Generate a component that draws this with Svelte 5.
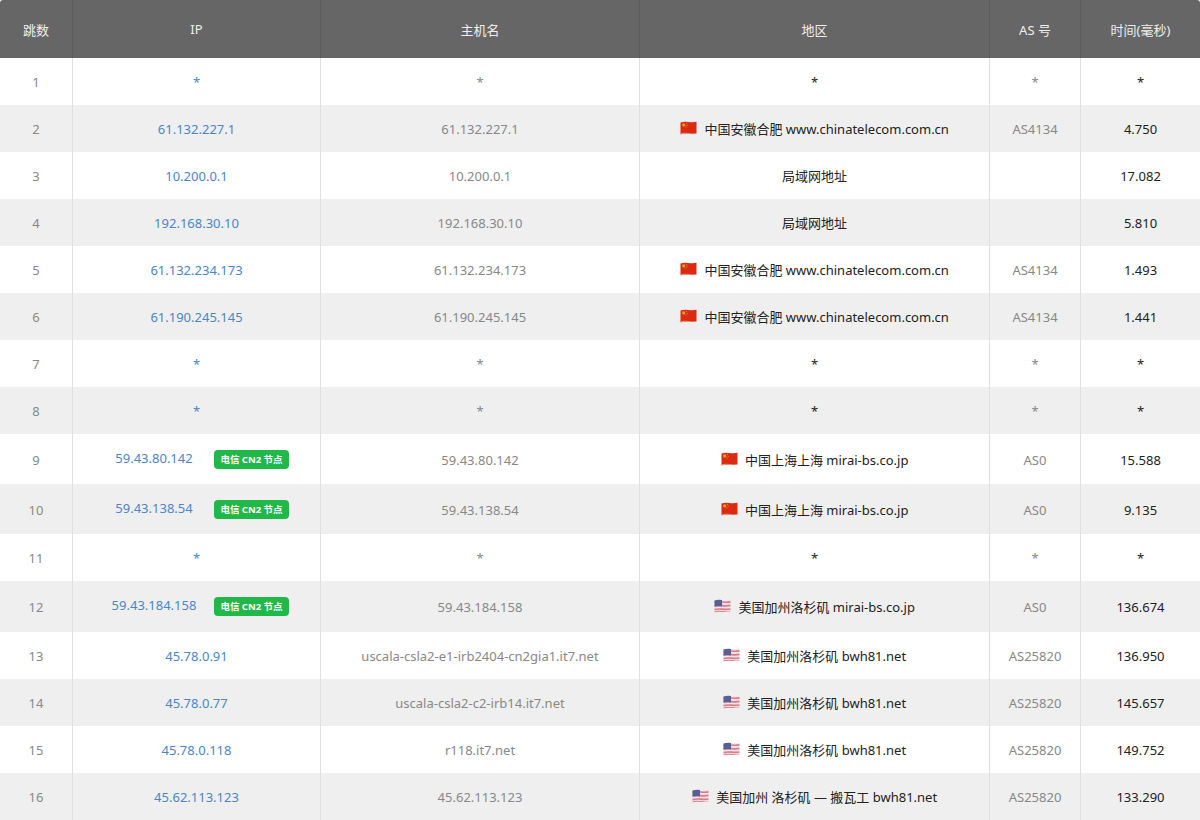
<script>
  const us = "美国加州洛杉矶";
  const hops = [
    { ip: "*", host: "*", region: "*", as: "*", time: "*" },
    { ip: "61.132.227.1", host: "61.132.227.1", flag: "cn", region: "中国安徽合肥 www.chinatelecom.com.cn", as: "AS4134", time: "4.750" },
    { ip: "10.200.0.1", host: "10.200.0.1", region: "局域网地址", as: "", time: "17.082" },
    { ip: "192.168.30.10", host: "192.168.30.10", region: "局域网地址", as: "", time: "5.810" },
    { ip: "61.132.234.173", host: "61.132.234.173", flag: "cn", region: "中国安徽合肥 www.chinatelecom.com.cn", as: "AS4134", time: "1.493" },
    { ip: "61.190.245.145", host: "61.190.245.145", flag: "cn", region: "中国安徽合肥 www.chinatelecom.com.cn", as: "AS4134", time: "1.441" },
    { ip: "*", host: "*", region: "*", as: "*", time: "*" },
    { ip: "*", host: "*", region: "*", as: "*", time: "*" },
    { ip: "59.43.80.142", host: "59.43.80.142", flag: "cn", region: "中国上海上海 mirai-bs.co.jp", as: "AS0", time: "15.588", cn2: true, size: "tall" },
    { ip: "59.43.138.54", host: "59.43.138.54", flag: "cn", region: "中国上海上海 mirai-bs.co.jp", as: "AS0", time: "9.135", cn2: true, size: "tall" },
    { ip: "*", host: "*", region: "*", as: "*", time: "*" },
    { ip: "59.43.184.158", host: "59.43.184.158", flag: "us", region: us + " mirai-bs.co.jp", as: "AS0", time: "136.674", cn2: true, size: "taller" },
    { ip: "45.78.0.91", host: "uscala-csla2-e1-irb2404-cn2gia1.it7.net", flag: "us", region: us + " bwh81.net", as: "AS25820", time: "136.950" },
    { ip: "45.78.0.77", host: "uscala-csla2-c2-irb14.it7.net", flag: "us", region: us + " bwh81.net", as: "AS25820", time: "145.657" },
    { ip: "45.78.0.118", host: "r118.it7.net", flag: "us", region: us + " bwh81.net", as: "AS25820", time: "149.752" },
    { ip: "45.62.113.123", host: "45.62.113.123", flag: "us", region: "美国加州 洛杉矶 — 搬瓦工 bwh81.net", as: "AS25820", time: "133.290" }
  ];
</script>

<table class="trace">
  <colgroup>
    <col class="c1" /><col class="c2" /><col class="c3" /><col class="c4" /><col class="c5" /><col class="c6" />
  </colgroup>
  <thead>
    <tr>
      <th>跳数</th>
      <th>IP</th>
      <th>主机名</th>
      <th>地区</th>
      <th>AS 号</th>
      <th>时间(毫秒)</th>
    </tr>
  </thead>
  <tbody>
    {#each hops as hop, i}
      <tr class={hop.size ?? ""}>
        <td class="muted">{i + 1}</td>
        <td class="ip">
          {#if hop.cn2}
            <div class="ip-wrap">
              <span class="ip-text">{hop.ip}</span>
              <span class="badge">电信 CN2 节点</span>
            </div>
          {:else}
            {hop.ip}
          {/if}
        </td>
        <td class="muted">{hop.host}</td>
        <td class="region">
          {#if hop.flag === "cn"}
            <svg class="flag" viewBox="0 0 17 14" aria-hidden="true">
              <path d="M0.5 1.5 Q4 0.4 8.5 1 T16.5 0.8 V12.6 Q12 13.4 8.5 12.9 T0.5 13.2 Z" fill="#dc2a12" />
              <path d="M0.5 12.4 Q4 11.5 8.5 12.1 T16.5 12 V12.6 Q12 13.4 8.5 12.9 T0.5 13.2 Z" fill="#e99a8a" />
              <circle cx="3.7" cy="3.9" r="1.6" fill="#ee9f22" />
              <circle cx="6.6" cy="2.5" r=".55" fill="#eda030" />
              <circle cx="7.3" cy="4.2" r=".55" fill="#eda030" />
              <circle cx="6" cy="6" r=".55" fill="#eda030" />
            </svg>
          {:else if hop.flag === "us"}
            <svg class="flag" viewBox="0 0 17 14" aria-hidden="true">
              <path d="M0.5 1.5 Q4 0.4 8.5 1 T16.5 0.8 V12.6 Q12 13.4 8.5 12.9 T0.5 13.2 Z" fill="#f3e2e5" />
              <path d="M0.5 3.4 Q4 2.4 8.5 3 T16.5 2.8 M0.5 7 Q4 6 8.5 6.6 T16.5 6.4 M0.5 10.6 Q4 9.6 8.5 10.2 T16.5 10" fill="none" stroke="#d67c8a" stroke-width="1.7" />
              <path d="M0.5 12.4 Q4 11.5 8.5 12.1 T16.5 12 V12.6 Q12 13.4 8.5 12.9 T0.5 13.2 Z" fill="#d87f8d" />
              <path d="M0.5 1.5 Q4 0.4 8 1 V7.4 Q4 6.9 0.5 7.6 Z" fill="#585f96" />
            </svg>
          {/if}
          <span>{hop.region}</span>
        </td>
        <td class="muted">{hop.as}</td>
        <td class="time">{hop.time}</td>
      </tr>
    {/each}
  </tbody>
</table>

<style>
  :global(body) { margin: 0; background: #fff; overflow: hidden; }

  .trace {
    width: 1200px;
    table-layout: fixed;
    border-collapse: separate;
    border-spacing: 0;
    font-family: "Noto Sans", "Noto Sans CJK SC", sans-serif;
    font-size: 13px;
    color: #222;
  }
  .c1 { width: 73px; }
  .c2 { width: 248px; }
  .c3 { width: 319px; }
  .c4 { width: 350px; }
  .c5 { width: 91px; }
  .c6 { width: 119px; }

  th {
    height: 58px;
    padding: 0;
    background: #666;
    color: #eee;
    font-weight: 400;
    text-align: center;
    border-right: 1px solid #5e5e5e;
  }
  th:first-child { border-top-left-radius: 3px; }
  th:last-child { border-right: 0; border-top-right-radius: 3px; }

  td {
    box-sizing: border-box;
    height: 47px;
    padding: 0;
    text-align: center;
    border-right: 1px solid #e0e0e0;
  }
  td:last-child { border-right: 0; }
  tbody tr:nth-child(even) td { background: #efefef; }
  tr.tall td { height: 50px; }
  tr.taller td { height: 51px; }
  tr.tall .muted, tr.tall .time { padding-top: 1px; }

  .muted { color: #888; }
  .ip { color: #4a86c8; }
  .time, .region { color: #222; }

  .ip-wrap {
    display: flex;
    justify-content: center;
    align-items: center;
    padding-right: 10px;
  }
  .ip-text { width: 120px; text-align: center; margin-top: -3px; }
  .badge {
    width: 75px;
    height: 19px;
    line-height: 19px;
    border-radius: 4px;
    background: #1fb849;
    color: #fff;
    font-size: 9.5px;
    font-weight: 700;
    white-space: nowrap;
  }

  .flag { width: 17px; height: 14px; margin-right: 4px; vertical-align: -1px; }
</style>
